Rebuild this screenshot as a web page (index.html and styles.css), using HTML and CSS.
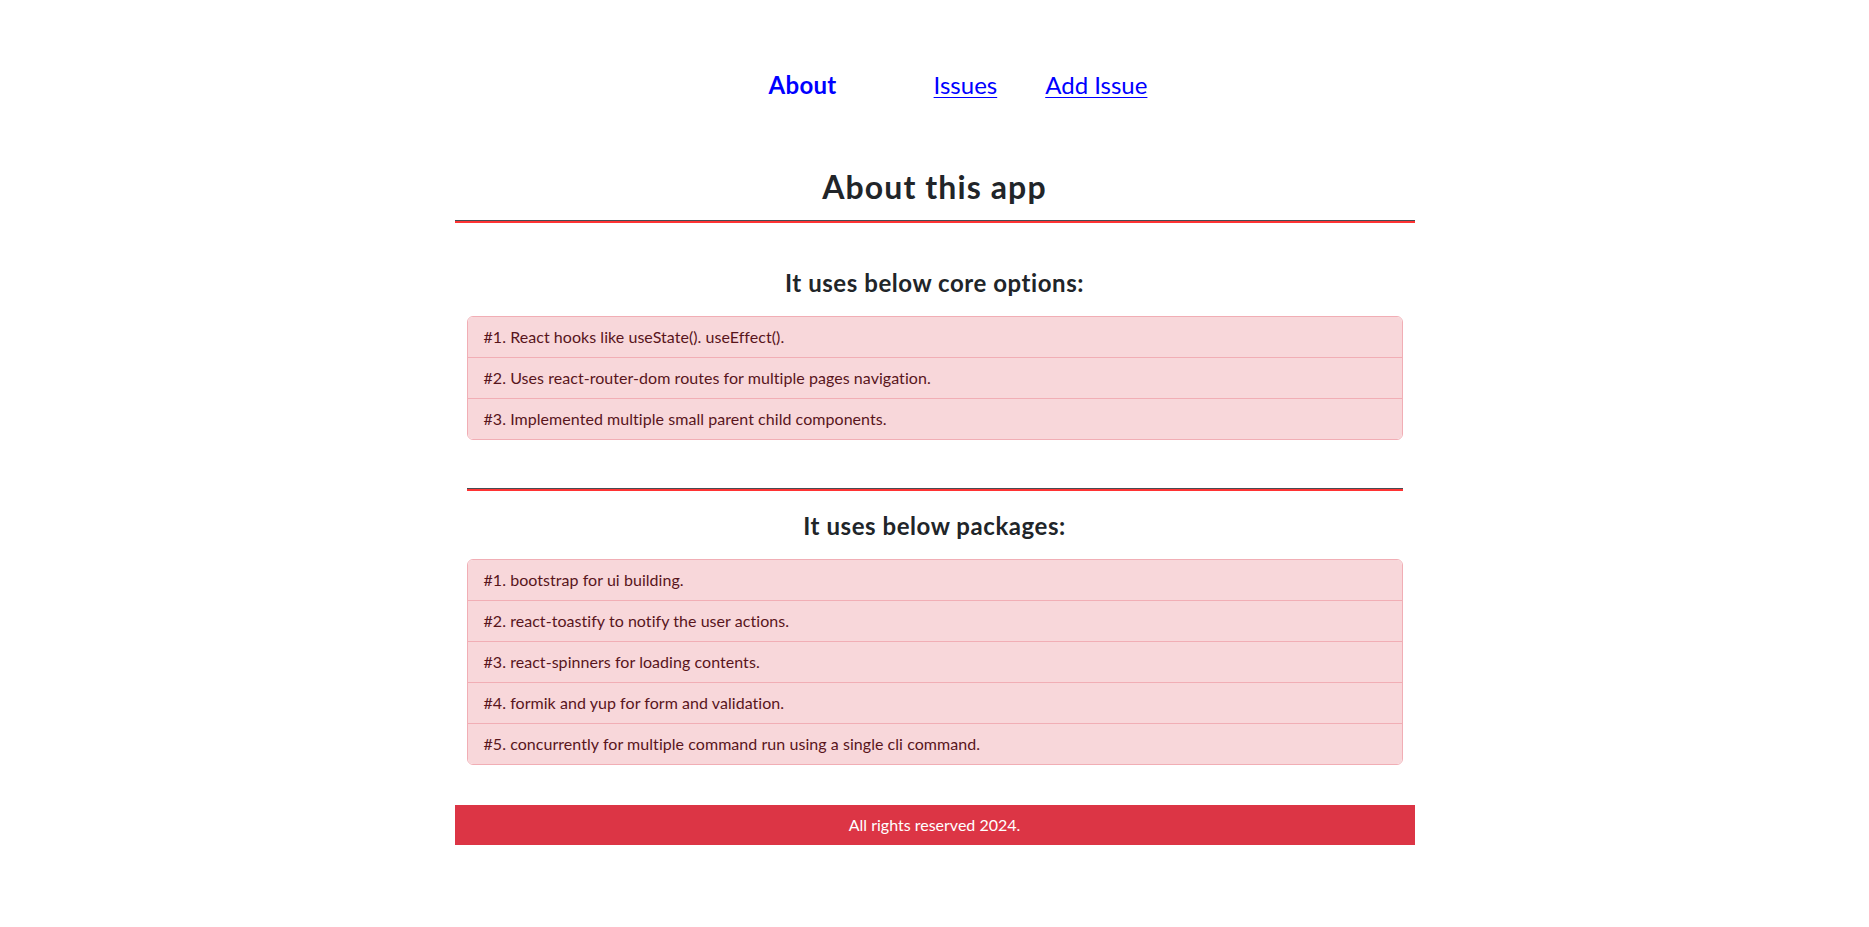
FILE: index.html
```html
<!DOCTYPE html>
<html lang="en">
<head>
<meta charset="utf-8">
<title>About this app</title>
<link rel="stylesheet" href="styles.css">
</head>
<body>
<nav class="topnav">
  <a class="nav-link nav-active" href="#">About</a>
  <a class="nav-link nav-issues" href="#">Issues</a>
  <a class="nav-link" href="#">Add Issue</a>
</nav>
<main class="container">
  <h2 class="page-title">About this app</h2>
  <hr class="rule">
  <section class="block block-first">
    <h4 class="block-title">It uses below core options:</h4>
    <ul class="list">
      <li class="list-item">#1. React hooks like useState(). useEffect().</li>
      <li class="list-item">#2. Uses react-router-dom routes for multiple pages navigation.</li>
      <li class="list-item">#3. Implemented multiple small parent child components.</li>
    </ul>
  </section>
  <section class="block block-second">
    <hr class="rule rule-inner">
    <h4 class="block-title">It uses below packages:</h4>
    <ul class="list">
      <li class="list-item">#1. bootstrap for ui building.</li>
      <li class="list-item">#2. react-toastify to notify the user actions.</li>
      <li class="list-item">#3. react-spinners for loading contents.</li>
      <li class="list-item">#4. formik and yup for form and validation.</li>
      <li class="list-item">#5. concurrently for multiple command run using a single cli command.</li>
    </ul>
  </section>
  <footer class="footer">All rights reserved 2024.</footer>
</main>
</body>
</html>
```
FILE: styles.css
```css
* { box-sizing: border-box; }

body {
  margin: 0;
  background: #ffffff;
  color: #212529;
  font-family: Lato, "Noto Sans", "Liberation Sans", sans-serif;
  font-size: 16px;
  line-height: 1.5;
}

.topnav {
  display: flex;
  justify-content: center;
  align-items: baseline;
  padding: 67px 0 0 47px;
  height: 103px;
}

.nav-link {
  font-size: 24px;
  line-height: 36px;
  color: #0000ff;
  text-decoration: underline;
  text-underline-offset: 3px;
  text-decoration-thickness: 1px;
}

.nav-active {
  font-weight: 700;
  text-decoration: none;
  margin-right: 97px;
  letter-spacing: 0.3px;
}

.nav-issues {
  margin-right: 48px;
}

.container {
  width: 960px;
  margin: 0 auto;
}

.page-title {
  margin: 65px 0 0;
  font-size: 32px;
  line-height: 38px;
  font-weight: 700;
  letter-spacing: 1.1px;
  text-align: center;
  color: #212529;
}

.rule {
  margin: 14px 0 0;
  height: 0;
  border: 0;
  border-top: 1px solid #484c52;
  border-bottom: 2px solid #ff3333;
}

.block {
  padding: 0 12px;
}

.block-title {
  margin: 45px 0 0;
  font-size: 24px;
  line-height: 29px;
  font-weight: 700;
  letter-spacing: 0.55px;
  text-align: center;
  color: #212529;
}

.block-second .rule-inner {
  margin-top: 48px;
}

.block-second .block-title {
  margin-top: 20px;
}

.list {
  list-style: none;
  margin: 19px 0 0;
  padding: 0;
  border: 1px solid #f1aeb5;
  border-radius: 6px;
  overflow: hidden;
}

.list-item {
  padding: 8px 16px;
  line-height: 24px;
  background: #f8d7da;
  color: #58151c;
  font-size: 16px;
  letter-spacing: 0.05px;
}

.list-item + .list-item {
  border-top: 1px solid #f1aeb5;
}

.footer {
  margin-top: 40px;
  height: 40px;
  padding: 8px 0;
  line-height: 24px;
  background: #dc3545;
  color: #ffffff;
  text-align: center;
  font-size: 16px;
}
```
